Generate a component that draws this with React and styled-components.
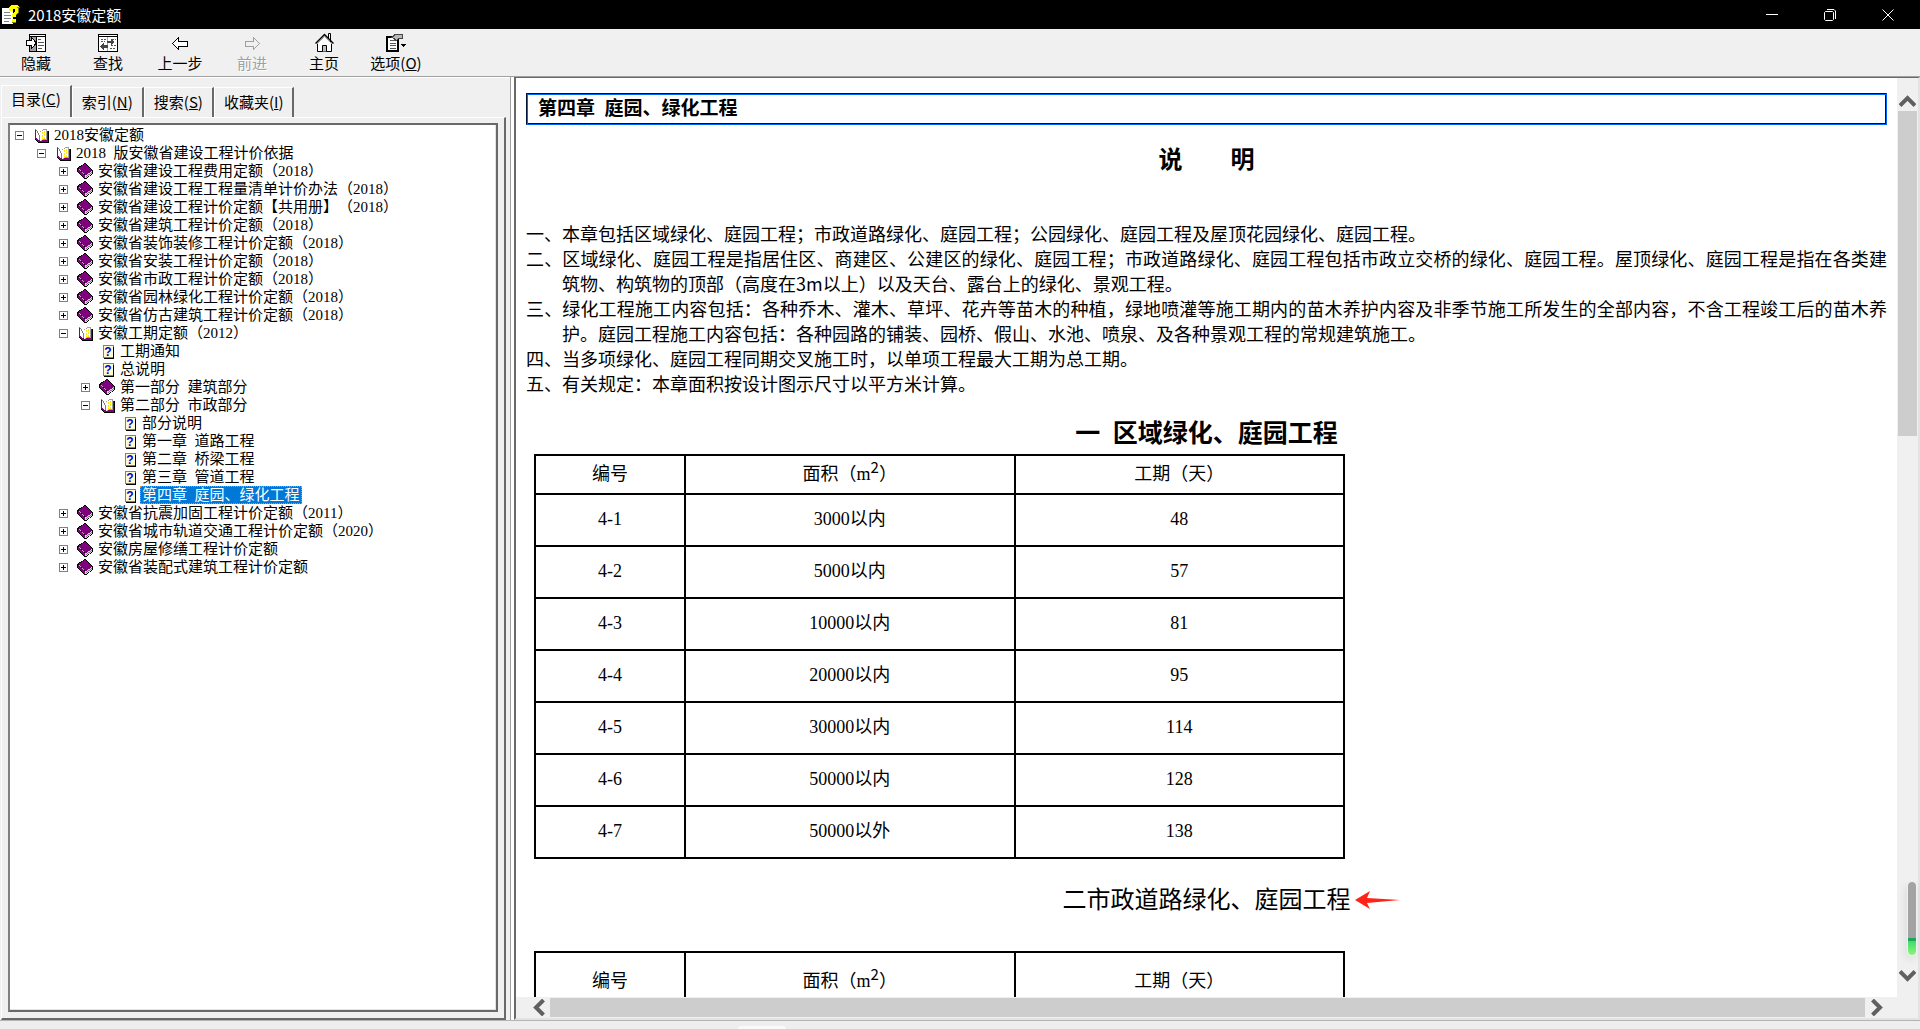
import { useState } from "react"
import styled, { createGlobalStyle, css } from "styled-components"

const UI_FONT = `"Noto Sans CJK SC", "Noto Sans", sans-serif`
const SONG_FONT = `"Liberation Serif", "Noto Sans CJK SC", sans-serif`

const GlobalStyles = createGlobalStyle`
    * {
        box-sizing: border-box;
    }

    body {
        margin: 0;
        overflow: hidden;
        background-color: #f0f0f0;
        color: #000;
        font-family: ${UI_FONT};
        font-size: 15px;
        text-spacing-trim: space-all;
    }

    button {
        margin: 0;
        padding: 0;
        border: 0;
        background: none;
        color: inherit;
        font: inherit;
    }

    svg {
        display: block;
        flex: none;
    }
`

const WindowStyles = styled.div`
    display: flex;
    flex-flow: column;
    height: 100vh;
`

/* title bar */

const TitleBarStyles = styled.header`
    display: flex;
    align-items: center;
    flex: none;
    height: 29px;
    padding-left: 2px;
    gap: 7px;
    background-color: #000;
    color: #fff;
`

const WindowTitleStyles = styled.h1`
    flex: 1;
    margin: 0;
    font-size: 15px;
    font-weight: 400;
    line-height: 28px;
`

const WindowControlsStyles = styled.div`
    display: flex;
    padding-right: 3px;
`

const WindowButtonStyles = styled.button`
    display: flex;
    align-items: center;
    justify-content: center;
    width: 58px;
    height: 28px;
`

/* toolbar */

const ToolbarStyles = styled.nav`
    display: flex;
    flex: none;
    height: 48px;
    border-bottom: 1px solid #a0a0a0;
`

const ToolButtonStyles = styled.button`
    display: flex;
    flex-flow: column;
    align-items: center;
    width: 72px;
    padding-top: 4px;
    line-height: 22px;
    white-space: nowrap;

    &:disabled {
        color: #a0a0a0;
        text-shadow: 1px 1px 0 #fff;
    }
`

const ToolIconStyles = styled.span`
    display: flex;
    align-items: center;
    height: 19px;
`

/* navigation pane */

const MainStyles = styled.main`
    display: flex;
    flex: 1;
    min-height: 0;
`

const NavPaneStyles = styled.aside`
    display: flex;
    flex-flow: column;
    flex: none;
    width: 510px;
    padding: 7px 4px 0 1px;
    border-top: 1px solid #fff;
`

const TabListStyles = styled.div`
    display: flex;
    align-items: flex-end;
    height: 32px;
`

const TabStyles = styled.button`
    height: 30px;
    padding: 0 9px 2px;
    border: 1px solid #fff;
    border-bottom: 0;
    border-right: 2px solid #696969;
    line-height: 26px;
    white-space: nowrap;

    ${props => props.$active && css`
        height: 32px;
        padding-bottom: 6px;
    `}
`

const TabPanelStyles = styled.div`
    display: flex;
    flex: 1;
    min-height: 0;
    padding: 5px 6px 6px;
    border: 1px solid #fff;
    border-right: 2px solid #696969;
    border-bottom: 2px solid #696969;
`

const TreeStyles = styled.ul`
    flex: 1;
    margin: 0;
    padding: 1px 0 0;
    border: 2px solid;
    border-color: #696969 #696969 #696969 #808080;
    background-color: #fff;
    box-shadow: inset -1px -1px 0 #e3e3e3;
    list-style: none;
    font-family: ${SONG_FONT};
    overflow: hidden;
`

const TreeRowStyles = styled.li`
    display: flex;
    align-items: center;
    height: 18px;
    padding-left: ${props => 5 + props.$depth * 22}px;
`

const ToggleStyles = styled.button`
    flex: none;
    width: 9px;
    height: 9px;
    margin-right: 9px;
    visibility: ${props => props.$hidden ? "hidden" : "visible"};
`

const TreeLabelStyles = styled.a`
    margin-left: 3px;
    padding: 0 2px;
    line-height: 18px;
    color: #000;
    text-decoration: none;
    white-space: nowrap;

    ${props => props.$selected && css`
        background-color: #0078d7;
        color: #fff;
        outline: 1px dotted #ff8728;
        outline-offset: -1px;
    `}
`

/* content pane */

const SplitterStyles = styled.div`
    flex: none;
    width: 4px;
    border-left: 1px solid #a0a0a0;
    background-color: #fff;
`

const ContentPaneStyles = styled.section`
    position: relative;
    display: grid;
    flex: 1;
    grid-template-columns: minmax(0, 1fr) 21px;
    grid-template-rows: minmax(0, 1fr) 21px;
    min-width: 0;
    border: solid;
    border-width: 1px 2px 2px 2px;
    border-color: #696969 #e3e3e3 #e3e3e3 #696969;
`

const DocumentStyles = styled.article`
    padding: 15px 10px 0;
    background-color: #fff;
    font-family: ${SONG_FONT};
    font-size: 18px;
    overflow: hidden;
`

const ChapterTitleStyles = styled.h2`
    margin: 0;
    padding-left: 11px;
    border: 1px solid;
    border-color: #001233 #0066ff #0066ff #001233;
    box-shadow: inset 1px 1px 0 #0066ff, inset -1px -1px 0 #001233;
    font-size: 19px;
    line-height: 30px;
`

const NotesTitleStyles = styled.h3`
    margin: 18px 0 44px;
    font-size: 24px;
    line-height: 34px;
    text-align: center;
`

const NoteStyles = styled.p`
    margin: 0;
    padding-left: 2em;
    font-family: ${UI_FONT};
    line-height: 25px;
    text-align: justify;
    text-indent: -2em;
`

const SectionTitleStyles = styled.h3`
    margin: 18px 0 0;
    font-size: 25px;
    line-height: 40px;
    text-align: center;

    ${props => props.$plain && css`
        margin: 16px 0 26px;
        font-size: 24px;
        font-weight: 400;
        line-height: 50px;
    `}
`

const TitleAnchorStyles = styled.span`
    position: relative;
`

const PointerStyles = styled.svg`
    position: absolute;
    top: 50%;
    left: 100%;
    margin: -9px 0 0 4px;
`

const QuotaTableStyles = styled.table`
    width: 811px;
    margin-left: 8px;
    border-collapse: collapse;
    table-layout: fixed;

    th,
    td {
        height: 52px;
        padding: 0 0 2px;
        border: 2px solid #000;
        font-weight: 400;
        line-height: 24px;
        text-align: center;
    }

    th {
        height: ${props => props.$headHeight}px;
    }

    th:first-child {
        width: 150px;
    }

    sup {
        font-family: ${UI_FONT};
        font-size: 15px;
        line-height: 0;
    }
`

const ScrollbarStyles = styled.div`
    display: flex;
    flex-flow: ${props => props.$vertical ? "column" : "row"};
    padding: ${props => props.$vertical ? "13px 1px 12px" : "1px 10px 1px 12px"};
    background-color: #f0f0f0;
`

const ScrollArrowStyles = styled.button`
    display: flex;
    align-items: center;
    justify-content: center;
    flex: none;
    width: ${props => props.$vertical ? "19px" : "22px"};
    height: ${props => props.$vertical ? "20px" : "19px"};
`

const ScrollTrackStyles = styled.div`
    flex: 1;
`

const ScrollThumbStyles = styled.div`
    width: ${props => props.$vertical ? "100%" : "auto"};
    height: ${props => props.$vertical ? "38%" : "100%"};
    background-color: #cdcdcd;
`

const MeterStyles = styled.div`
    position: absolute;
    right: 1px;
    bottom: 62px;
    width: 10px;
    height: 75px;
    border: 1px solid #f0f0f0;
    border-radius: 5px;
    background: linear-gradient(#a3a3a3 56px, #18a957 56px, #18a957 59px, #3fdb6c 59px, #8cf57c);
    box-shadow: -2px 4px 8px rgb(0 0 0 / 8%);
`

const StatusBarStyles = styled.footer`
    display: flex;
    flex: none;
    height: 9px;
    padding: 5px 0 0 738px;
    border-top: 1px solid #b4b4b4;
    background-color: #eee;
`

const StatusHandleStyles = styled.div`
    width: 48px;
    border-radius: 4px 4px 0 0;
    background-color: #fafafa;
`

/* icons */

const HelpFileIcon = () => <svg width="19" height="19" viewBox="0 0 19 19" shapeRendering="crispEdges">
    <path d="M0 3h7l4 4v12H0z" fill="#fff" />
    <path d="M2 8h6M2 11h7M2 14h7M2 17h5" transform="translate(0 -.5)" stroke="#808080" />
    <path d="M7 2l2-2h6l2 2v5l-3 3v2h-4V9l3-3V4h-2v2H7z" fill="#ff0" />
    <path d="M10 14h4v3h-4z" fill="#ff0" />
    <path d="M15 2h3v1h-1v4l-3 3V9l2-2V3h-1zM10 17h4v1h-4z" fill="#808000" />
</svg>

const HideIcon = () => <svg width="20" height="18" viewBox="0 0 20 18" shapeRendering="crispEdges">
    <path d="M3.5.5h16v17h-16z" fill="#fff" stroke="#000" />
    <path d="M4 3h6v14H4z" fill="#a0a0a0" />
    <path d="M3 2.5h17M10.5 3v15" stroke="#000" />
    <path d="M12 5.5h3M12 8.5h6M12 11.5h6M12 14.5h4" stroke="#555" />
    <path d="M.5 6.500h5v-3l5 5.500-5 5.500v-3h-5z" fill="#fff" stroke="#000" />
</svg>

const LocateIcon = () => <svg width="20" height="18" viewBox="0 0 20 18" shapeRendering="crispEdges">
    <path d="M.5.5h19v17H.5z" fill="#fff" stroke="#000" />
    <path d="M1 2.5h18" stroke="#000" />
    <path d="M9.5 3v14" stroke="#a0a0a0" />
    <path d="M3 5.5h5M3 7.5h4M13 11.5h5M12 14.5h6M14 5.5h4" stroke="#555" strokeDasharray="2 1" />
    <path d="M9 7h4V5l3 3-3 3V9H9z" fill="#444" />
    <path d="M10 11H6V9l-4 3.5L6 16v-2h4z" fill="#444" />
</svg>

const ArrowIcon = ({ forward }) => <svg width="16" height="18" viewBox="0 0 16 18" shapeRendering="crispEdges">
    <path
        d="M.5 9.500L6.500 3.500v3.500h8.500v5H6.500v3.500z"
        transform={forward ? "matrix(-1 0 0 1 16 0)" : undefined}
        fill={forward ? "#f0f0f0" : "#fff"}
        stroke={forward ? "#a0a0a0" : "#000"}
    />
</svg>

const HomeIcon = () => <svg width="19" height="19" viewBox="0 0 19 19">
    <path d="M13.5 6V.5h2V9" fill="#fff" stroke="#000" />
    <path d="M3 9.500v9h13v-9L9.500 3z" fill="#fff" />
    <path d="M2.5 10v8.500h14V10" fill="none" stroke="#000" />
    <path d="M.5 10.500l9-9 9 9" fill="none" stroke="#000" strokeWidth="1.500" />
    <path d="M2 11l7.500-7.500L17 11" fill="none" stroke="#a0a0a0" />
    <path d="M7.500 18.500v-6h4v6" fill="#c0c0c0" stroke="#000" />
</svg>

const OptionsIcon = () => <svg width="20" height="18" viewBox="0 0 20 18" shapeRendering="crispEdges">
    <path d="M1 3h11v14H1z" fill="#fff" stroke="#000" strokeWidth="2" />
    <path d="M4 6.5h6M4 9.5h6M4 11.5h6M4 14.5h6" stroke="#555" />
    <path d="M6 3.500l3-3h7v4h-3l-3 2-2-2z" fill="#b8b8b8" stroke="#444" />
    <path d="M15 10h5l-2.500 3z" fill="#000" />
</svg>

const OpenBookIcon = () => <svg width="16" height="16" viewBox="0 0 16 16" shapeRendering="crispEdges">
    <path d="M2 12l3 3h10V4h1v12H5l-4-4z" fill="#000" />
    <path d="M1 2h1v10l3 3h10V4h-1v9H6l-3-3V2z" fill="#800080" />
    <path d="M3 2l3 3v9l-3-3z" fill="#fff" />
    <path d="M2.5 2v1M3.5 3v1M4.5 4v2M5.5 6v2M6.5 8v5" stroke="#808080" />
    <path d="M7 5l2-2h5v9h-4l-2 2H7z" fill="#fff" />
    <path d="M7.500 5V4M8.500 3.500h1M10 2.500h4M13.500 3v9M8 13.500h1M9.500 12.500h4" stroke="#a0a0a0" />
    <path d="M9.500 5v8M11.500 4v8" stroke="#ffe600" strokeDasharray="2 1" />
</svg>

const ClosedBookIcon = () => <svg width="16" height="16" viewBox="0 0 16 16" shapeRendering="crispEdges">
    <path d="M0 5l8-5 8 8v3l-7 5H7L0 9z" fill="#000" />
    <path d="M8 12l7-4v3l-6 4H8z" fill="#d8d8d8" />
    <path d="M9 13.500l6-4" stroke="#808080" />
    <path d="M1 5l7-4 7 7-6 4H8z" fill="#800080" />
    <path d="M1 6l7 7v2L1 9z" fill="#800080" />
    <path d="M2 6l6 6" stroke="#d8a0d8" strokeDasharray="1 1" />
</svg>

const TopicIcon = () => <svg width="16" height="16" viewBox="0 0 16 16" shapeRendering="crispEdges">
    <path d="M4.500 2.500h10v12h-10z" fill="#fffbd0" stroke="#808080" />
    <path d="M14.500 4v11.500H5" fill="none" stroke="#000" />
    <text x="9" y="13" fill="#0000e0" fontFamily="Liberation Sans, sans-serif" fontSize="12" fontWeight="700" textAnchor="middle">?</text>
</svg>

const ToggleIcon = ({ open }) => <svg width="9" height="9" viewBox="0 0 9 9" shapeRendering="crispEdges">
    <path d="M.5.5h8v8h-8z" fill="#fff" stroke="#808080" />
    <path d={open ? "M2 4.500h5" : "M2 4.500h5M4.500 2v5"} stroke="#000" />
</svg>

const ChevronIcon = ({ turn = 0 }) => <svg width="17" height="17" viewBox="0 0 17 17">
    <path d="M1 12.500L8.500 5l7.500 7.500" transform={`rotate(${turn} 8.500 8.500)`} fill="none" stroke="#606060" strokeWidth="4" />
</svg>

const WINDOW_BUTTONS = [
    { name: "最小化", path: "M0 5.500h12" },
    { name: "向下还原", path: "M1.500 2.500h7l1 1v7l-1 1h-7l-1-1v-7zM3 .5h7l1.500 1.500v8" },
    { name: "关闭", path: "M.5.5l11 11M11.500.5l-11 11" },
]

const TOOLS = [
    { label: "隐藏", icon: <HideIcon /> },
    { label: "查找", icon: <LocateIcon /> },
    { label: "上一步", icon: <ArrowIcon /> },
    { label: "前进", icon: <ArrowIcon forward />, disabled: true },
    { label: "主页", icon: <HomeIcon /> },
    { label: "选项", hotkey: "O", icon: <OptionsIcon /> },
]

const TABS = [
    { label: "目录", hotkey: "C" },
    { label: "索引", hotkey: "N" },
    { label: "搜索", hotkey: "S" },
    { label: "收藏夹", hotkey: "I" },
]

const TREE = [
    { depth: 0, kind: "open", title: "2018安徽定额" },
    { depth: 1, kind: "open", title: "2018\u2002版安徽省建设工程计价依据" },
    { depth: 2, kind: "closed", title: "安徽省建设工程费用定额（2018）" },
    { depth: 2, kind: "closed", title: "安徽省建设工程工程量清单计价办法（2018）" },
    { depth: 2, kind: "closed", title: "安徽省建设工程计价定额【共用册】（2018）" },
    { depth: 2, kind: "closed", title: "安徽省建筑工程计价定额（2018）" },
    { depth: 2, kind: "closed", title: "安徽省装饰装修工程计价定额（2018）" },
    { depth: 2, kind: "closed", title: "安徽省安装工程计价定额（2018）" },
    { depth: 2, kind: "closed", title: "安徽省市政工程计价定额（2018）" },
    { depth: 2, kind: "closed", title: "安徽省园林绿化工程计价定额（2018）" },
    { depth: 2, kind: "closed", title: "安徽省仿古建筑工程计价定额（2018）" },
    { depth: 2, kind: "open", title: "安徽工期定额（2012）" },
    { depth: 3, kind: "topic", title: "工期通知" },
    { depth: 3, kind: "topic", title: "总说明" },
    { depth: 3, kind: "closed", title: "第一部分\u2002建筑部分" },
    { depth: 3, kind: "open", title: "第二部分\u2002市政部分" },
    { depth: 4, kind: "topic", title: "部分说明" },
    { depth: 4, kind: "topic", title: "第一章\u2002道路工程" },
    { depth: 4, kind: "topic", title: "第二章\u2002桥梁工程" },
    { depth: 4, kind: "topic", title: "第三章\u2002管道工程" },
    { depth: 4, kind: "topic", title: "第四章\u2002庭园、绿化工程" },
    { depth: 2, kind: "closed", title: "安徽省抗震加固工程计价定额（2011）" },
    { depth: 2, kind: "closed", title: "安徽省城市轨道交通工程计价定额（2020）" },
    { depth: 2, kind: "closed", title: "安徽房屋修缮工程计价定额" },
    { depth: 2, kind: "closed", title: "安徽省装配式建筑工程计价定额" },
]

const TREE_ICONS = {
    open: <OpenBookIcon />,
    closed: <ClosedBookIcon />,
    topic: <TopicIcon />,
}

const NOTES = [
    "一、本章包括区域绿化、庭园工程；市政道路绿化、庭园工程；公园绿化、庭园工程及屋顶花园绿化、庭园工程。",
    "二、区域绿化、庭园工程是指居住区、商建区、公建区的绿化、庭园工程；市政道路绿化、庭园工程包括市政立交桥的绿化、庭园工程。屋顶绿化、庭园工程是指在各类建筑物、构筑物的顶部（高度在3m以上）以及天台、露台上的绿化、景观工程。",
    "三、绿化工程施工内容包括：各种乔木、灌木、草坪、花卉等苗木的种植，绿地喷灌等施工期内的苗木养护内容及非季节施工所发生的全部内容，不含工程竣工后的苗木养护。庭园工程施工内容包括：各种园路的铺装、园桥、假山、水池、喷泉、及各种景观工程的常规建筑施工。",
    "四、当多项绿化、庭园工程同期交叉施工时，以单项工程最大工期为总工期。",
    "五、有关规定：本章面积按设计图示尺寸以平方米计算。",
]

const QUOTAS = [
    ["4-1", "3000以内", "48"],
    ["4-2", "5000以内", "57"],
    ["4-3", "10000以内", "81"],
    ["4-4", "20000以内", "95"],
    ["4-5", "30000以内", "114"],
    ["4-6", "50000以内", "128"],
    ["4-7", "50000以外", "138"],
]

function Caption({ label, hotkey }) {
    return <span>{label}{hotkey && <>(<u>{hotkey}</u>)</>}</span>
}

function QuotaTable({ rows = [], headHeight }) {
    return <QuotaTableStyles $headHeight={headHeight}>
        <thead>
            <tr>
                <th>编号</th>
                <th>面积（m<sup>2</sup>）</th>
                <th>工期（天）</th>
            </tr>
        </thead>
        <tbody>
            {rows.map(row => <tr key={row[0]}>
                {row.map(cell => <td key={cell}>{cell}</td>)}
            </tr>)}
        </tbody>
    </QuotaTableStyles>
}

function Scrollbar({ vertical }) {
    return <ScrollbarStyles $vertical={vertical}>
        <ScrollArrowStyles $vertical={vertical} aria-label={vertical ? "向上滚动" : "向左滚动"}>
            <ChevronIcon turn={vertical ? 0 : -90} />
        </ScrollArrowStyles>
        <ScrollTrackStyles>
            <ScrollThumbStyles $vertical={vertical} />
        </ScrollTrackStyles>
        <ScrollArrowStyles $vertical={vertical} aria-label={vertical ? "向下滚动" : "向右滚动"}>
            <ChevronIcon turn={vertical ? 180 : 90} />
        </ScrollArrowStyles>
    </ScrollbarStyles>
}

export default function App() {
    const [activeTab, setActiveTab] = useState("目录")
    const [selected, setSelected] = useState("第四章\u2002庭园、绿化工程")

    const handleSelect = (e, title) => {
        e.preventDefault()
        setSelected(title)
    }

    return <WindowStyles>
        <GlobalStyles />
        <TitleBarStyles>
            <HelpFileIcon />
            <WindowTitleStyles>2018安徽定额</WindowTitleStyles>
            <WindowControlsStyles>
                {WINDOW_BUTTONS.map(({ name, path }) => <WindowButtonStyles key={name} aria-label={name}>
                    <svg width="12" height="12" viewBox="0 0 12 12">
                        <path d={path} fill="none" stroke="#fff" />
                    </svg>
                </WindowButtonStyles>)}
            </WindowControlsStyles>
        </TitleBarStyles>

        <ToolbarStyles>
            {TOOLS.map(tool => <ToolButtonStyles key={tool.label} disabled={tool.disabled}>
                <ToolIconStyles>{tool.icon}</ToolIconStyles>
                <Caption label={tool.label} hotkey={tool.hotkey} />
            </ToolButtonStyles>)}
        </ToolbarStyles>

        <MainStyles>
            <NavPaneStyles>
                <TabListStyles role="tablist">
                    {TABS.map(tab => <TabStyles
                        key={tab.label}
                        role="tab"
                        aria-selected={tab.label === activeTab}
                        $active={tab.label === activeTab}
                        onClick={() => setActiveTab(tab.label)}>
                        <Caption label={tab.label} hotkey={tab.hotkey} />
                    </TabStyles>)}
                </TabListStyles>
                <TabPanelStyles role="tabpanel">
                    <TreeStyles>
                        {TREE.map(({ depth, kind, title }) => <TreeRowStyles key={title} $depth={depth}>
                            <ToggleStyles $hidden={kind === "topic"} aria-label="展开或折叠">
                                <ToggleIcon open={kind === "open"} />
                            </ToggleStyles>
                            {TREE_ICONS[kind]}
                            <TreeLabelStyles
                                href="#"
                                $selected={title === selected}
                                onClick={e => handleSelect(e, title)}>
                                {title}
                            </TreeLabelStyles>
                        </TreeRowStyles>)}
                    </TreeStyles>
                </TabPanelStyles>
            </NavPaneStyles>

            <SplitterStyles />

            <ContentPaneStyles>
                <DocumentStyles>
                    <ChapterTitleStyles>第四章&ensp;庭园、绿化工程</ChapterTitleStyles>
                    <NotesTitleStyles>说　　明</NotesTitleStyles>
                    {NOTES.map(note => <NoteStyles key={note}>{note}</NoteStyles>)}

                    <SectionTitleStyles>一&ensp;区域绿化、庭园工程</SectionTitleStyles>
                    <QuotaTable rows={QUOTAS} headHeight={39} />

                    <SectionTitleStyles $plain>
                        <TitleAnchorStyles>
                            二市政道路绿化、庭园工程
                            <PointerStyles width="46" height="18" viewBox="0 0 46 18">
                                <path d="M0 9L15 0l-3 7 33 2-33 3 3 6z" fill="#ff2416" />
                            </PointerStyles>
                        </TitleAnchorStyles>
                    </SectionTitleStyles>
                    <QuotaTable headHeight={60} />
                </DocumentStyles>
                <Scrollbar vertical />
                <Scrollbar />
                <MeterStyles />
            </ContentPaneStyles>
        </MainStyles>

        <StatusBarStyles>
            <StatusHandleStyles />
        </StatusBarStyles>
    </WindowStyles>
}
